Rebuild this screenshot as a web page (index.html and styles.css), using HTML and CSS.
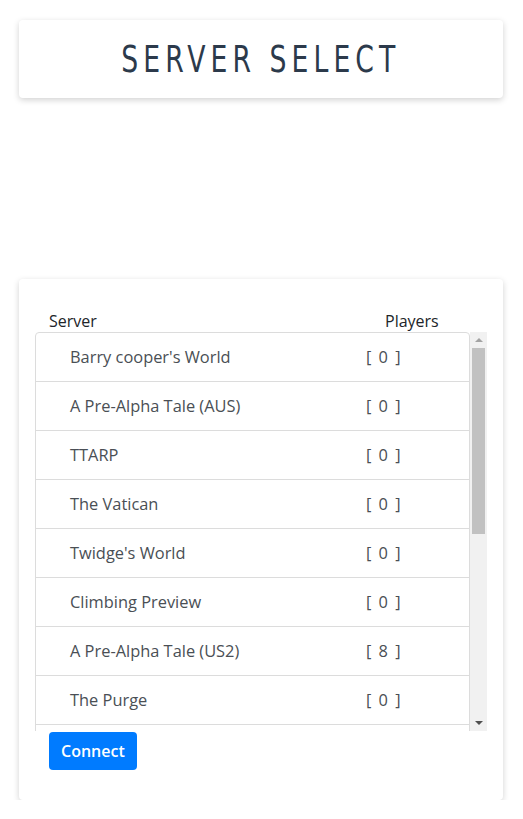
FILE: index.html
```html
<!DOCTYPE html>
<html>
<head>
<meta charset="utf-8">
<link rel="stylesheet" href="styles.css">
</head>
<body>
<div class="page">
  <div class="card title-card">
    <h1 class="title">SERVER SELECT</h1>
  </div>
  <div class="card list-card">
    <div class="list-head">
      <span>Server</span>
      <span>Players</span>
    </div>
    <div class="scroll">
      <ul class="list-group">
        <li class="item"><span>Barry cooper's World</span><span class="count">[ 0 ]</span></li>
        <li class="item"><span>A Pre-Alpha Tale (AUS)</span><span class="count">[ 0 ]</span></li>
        <li class="item"><span>TTARP</span><span class="count">[ 0 ]</span></li>
        <li class="item"><span>The Vatican</span><span class="count">[ 0 ]</span></li>
        <li class="item"><span>Twidge's World</span><span class="count">[ 0 ]</span></li>
        <li class="item"><span>Climbing Preview</span><span class="count">[ 0 ]</span></li>
        <li class="item"><span>A Pre-Alpha Tale (US2)</span><span class="count">[ 8 ]</span></li>
        <li class="item"><span>The Purge</span><span class="count">[ 0 ]</span></li>
        <li class="item"></li>
      </ul>
      <div class="sbar">
        <div class="arrow up"></div>
        <div class="thumb"></div>
        <div class="track"></div>
        <div class="arrow down"></div>
      </div>
    </div>
    <button class="btn">Connect</button>
  </div>
</div>
</body>
</html>
```
FILE: styles.css
```css
html, body {
  margin: 0;
  padding: 0;
  background: #fff;
}
body {
  font-family: "Open Sans", "Noto Sans", sans-serif;
  color: #212529;
}
.page {
  padding: 20px 20px 0 19px;
  display: flex;
  flex-direction: column;
  gap: 181px;
}
.card {
  background: #fff;
  border-radius: 4px;
  box-shadow: 0 2px 6px rgba(0, 0, 0, 0.18);
}
.title-card {
  height: 78px;
  display: flex;
  align-items: center;
  justify-content: center;
}
.title {
  margin: 0;
  font-family: "DejaVu Sans Condensed", "DejaVu Sans", sans-serif;
  font-weight: normal;
  font-size: 38px;
  letter-spacing: 6.5px;
  color: #2c3a4b;
  transform: scaleX(0.78);
}
.list-card {
  padding: 31px 16px 30px 16px;
  display: flex;
  flex-direction: column;
}
.list-head {
  display: grid;
  grid-template-columns: 336px 1fr;
  padding-left: 14px;
  font-size: 16px;
  line-height: 22px;
  color: #212529;
}
.scroll {
  height: 399px;
  width: 452px;
  display: flex;
  overflow: hidden;
}
.list-group {
  flex: 1;
  list-style: none;
  margin: 0;
  padding: 0;
  overflow: hidden;
}
.item {
  display: grid;
  grid-template-columns: 296px 1fr;
  align-items: center;
  height: 46px;
  padding: 0 0 2px 34px;
  border: 1px solid #dcdcdc;
  margin-bottom: -1px;
  font-size: 16.4px;
  color: #4a4f55;
}
.item:first-child {
  border-top-left-radius: 4px;
  border-top-right-radius: 4px;
}
.count {
  word-spacing: 3px;
}
.sbar {
  width: 17px;
  flex: none;
  background: #f1f1f1;
  display: flex;
  flex-direction: column;
}
.arrow {
  height: 16px;
  flex: none;
  display: flex;
  align-items: center;
  justify-content: center;
}
.arrow::before {
  content: "";
  width: 0;
  height: 0;
  border-left: 4px solid transparent;
  border-right: 4px solid transparent;
}
.arrow.up::before {
  border-bottom: 4px solid #a3a3a3;
}
.arrow.down::before {
  border-top: 4px solid #505050;
}
.thumb {
  height: 186px;
  flex: none;
  margin: 0 2px;
  background: #c1c1c1;
}
.track {
  flex: 1;
}
.btn {
  align-self: flex-start;
  margin: 1px 0 0 14px;
  height: 38px;
  padding: 0 12px;
  background: #007bff;
  color: #fff;
  border: none;
  border-radius: 4px;
  font-family: "Open Sans", "Noto Sans", sans-serif;
  font-weight: 600;
  font-size: 16px;
}
```
